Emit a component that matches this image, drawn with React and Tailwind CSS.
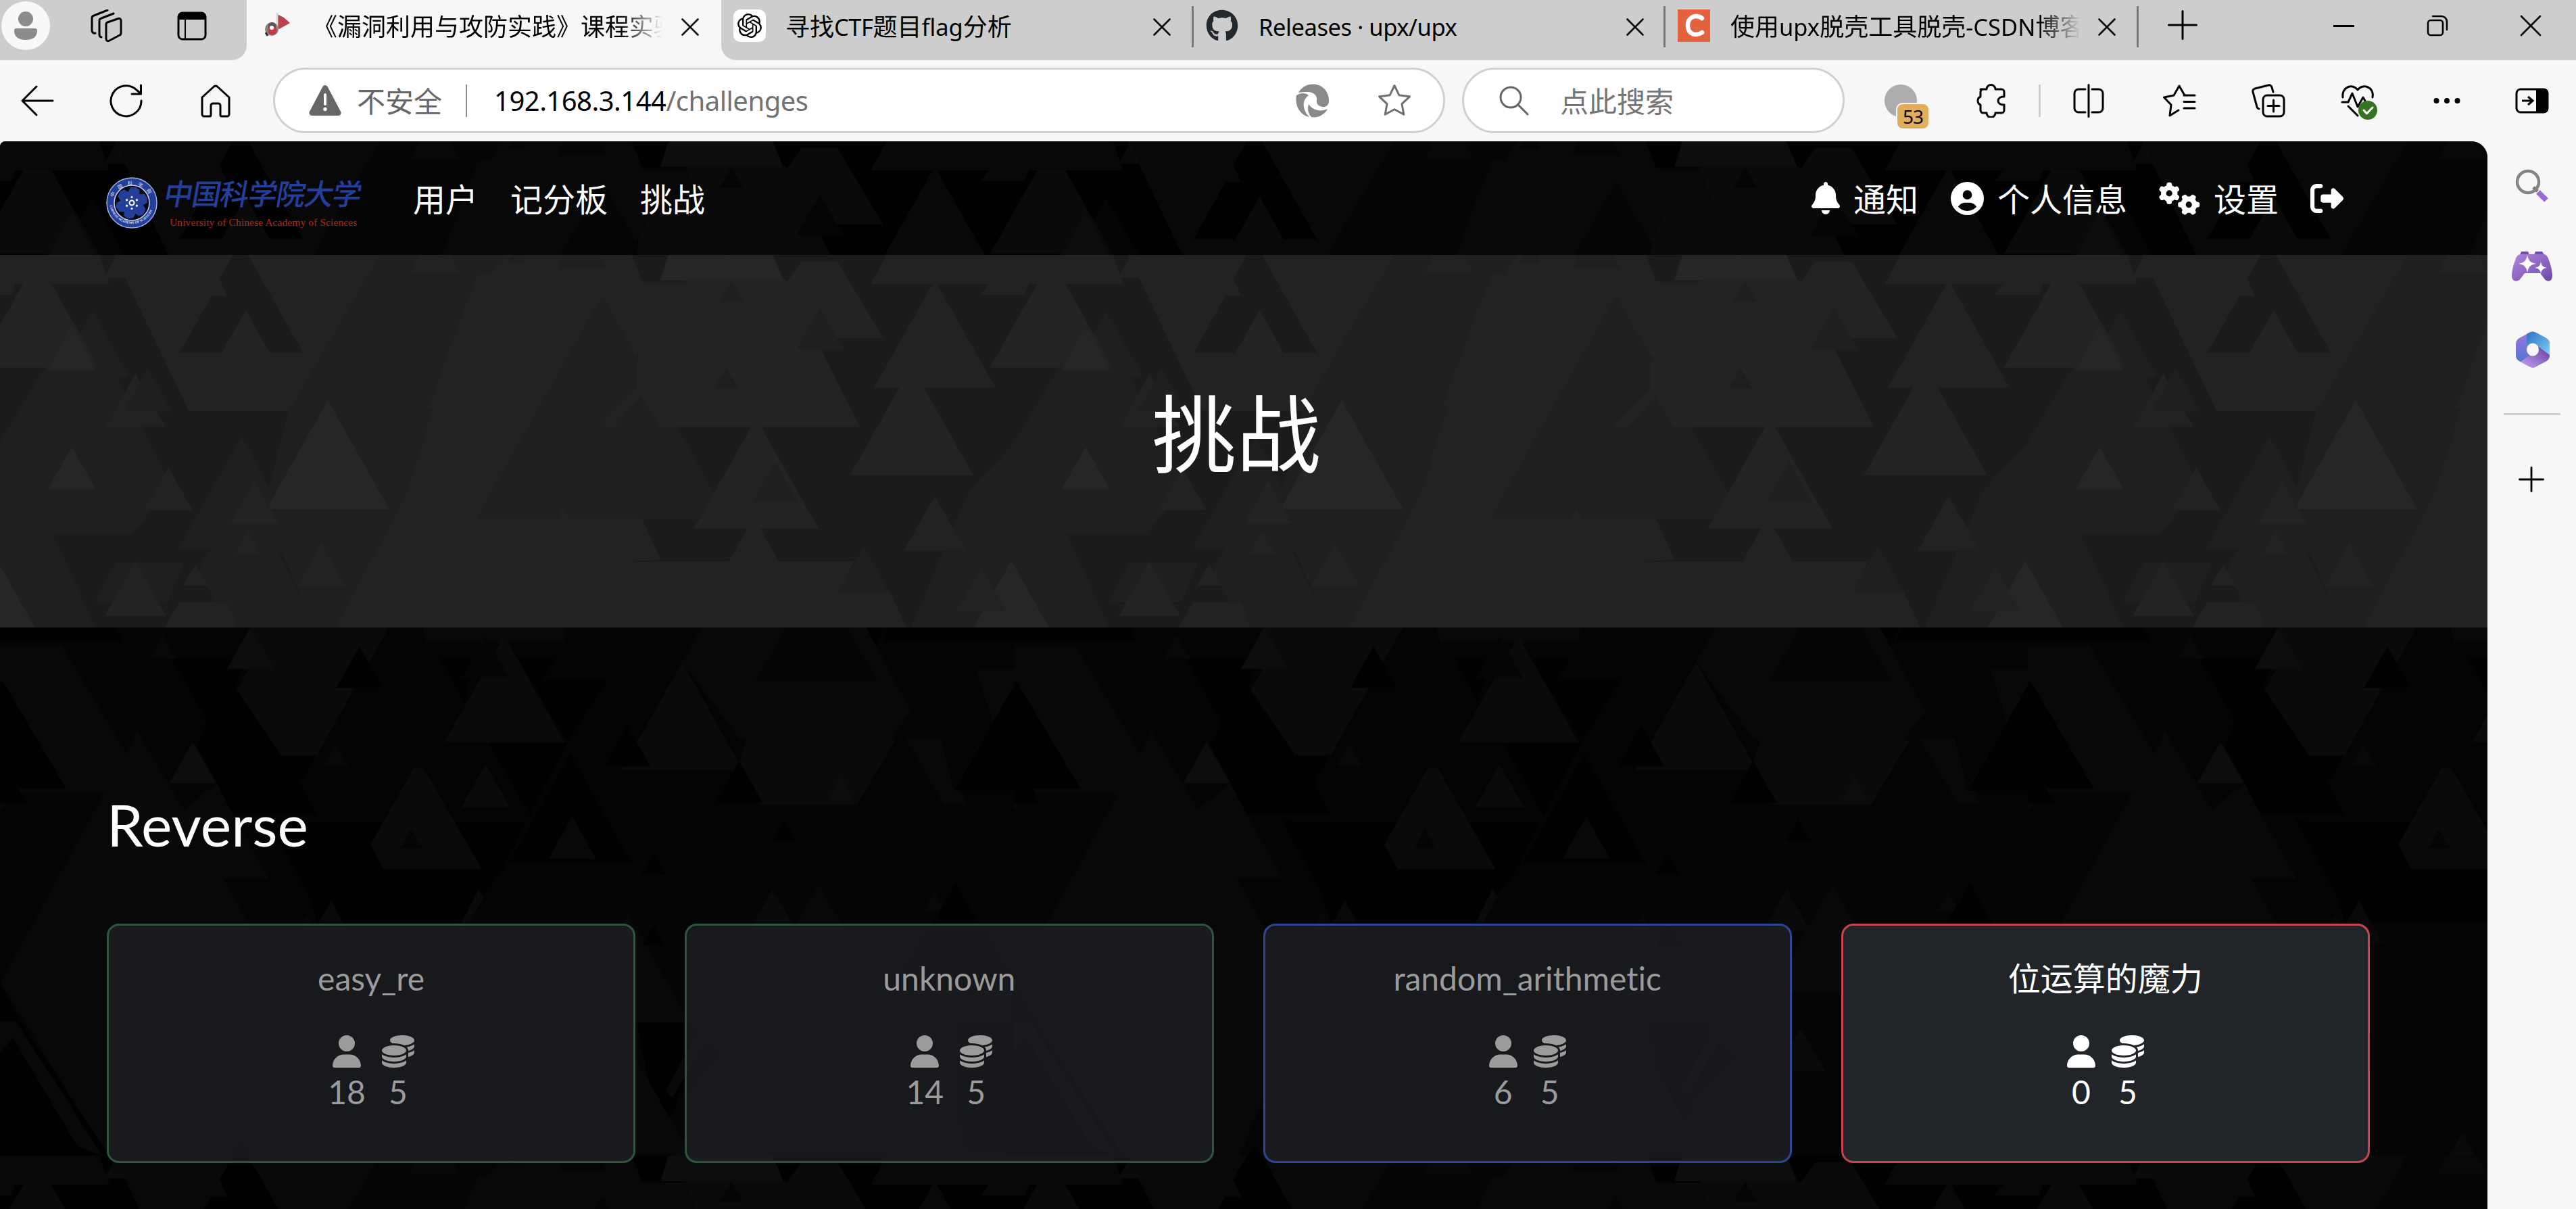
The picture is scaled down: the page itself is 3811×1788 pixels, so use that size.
import React from "react";
import { FaBell, FaCircleUser, FaGears, FaRightFromBracket, FaUser, FaCoins, FaGithub } from "react-icons/fa6";
import { SiOpenai } from "react-icons/si";

/* ---------- triangle wallpaper (1500 x 1500 tile) ---------- */

const shade = { k: "#010101", j: "#040404", a: "#050505", b: "#080808", c: "#0a0a0a", d: "#0d0d0d" };

// Strings are polygons, number lists are [apexX, top, bottom] triangles.
const upper = [
  ["a", "475,0 640,0 600,600 420,1280 400,1280 330,860 362,532"],
  ["a", "1330,380 1410,380 1485,780 1437,940 1337,940 1395,1280 1138,1280 1215,800 1271,640"],
  ["b", "-10,0 122,0 137,112 -10,112"],
  ["b", "140,0 480,0 362,532 237,532"],
  ["k", "308,0 380,340 225,340 265,152 285,152 275,95 295,0"],
  ["b", "636,0 790,0 805,105 862,105 880,240 820,240 798,350 830,890 805,890 828,1025 780,1032 1070,1032 1055,1130 1115,1130 1142,1280 414,1280 510,810 580,205"],
  ["a", [755, 150, 890]],
  ["b", "600,80 630,80 605,330 577,520 537,520 548,440 558,370 580,205"],
  ["b", "528,0 563,0 575,75 515,75"],
  ["c", "860,100 985,100 1078,585 828,585 798,460 800,340 820,240 880,240"],
  ["b", "798,460 806,480 770,585 750,585"],
  ["a", "708,0 750,0 760,62 700,62"],
  ["a", "645,0 660,0 658,42 634,42"],
  ["d", "840,0 966,0 982,100 828,100"],
  ["c", "1005,38 1050,38 1107,290 1010,290 980,130"],
  ["a", [917, 100, 170]],
  ["j", [911, 388, 460]],
  ["a", [1028, 190, 330]],
  ["b", [1172, 100, 455]],
  ["b", "1115,0 1391,0 1408,112 1092,112"],
  ["b", "1240,112 1290,112 1285,148 1230,148"],
  ["c", [1143, 385, 745]],
  ["a", [1387, 205, 420]],
  ["c", [1318, 30, 388]],
  ["d", [1361, 255, 398]],
  ["c", [145, 25, 90]],
  ["c", [308, 200, 340]],
  ["a", "303,620 380,1000 225,985"],
  ["d", [411, 498, 858]],
  ["d", [90, 652, 792]],
  ["b", [211, 720, 860]],
  ["c", [319, 765, 905]],
  ["b", [170, 410, 585]],
  ["a", [185, 395, 535]],
  ["a", [488, 580, 722]],
  ["a", "145,1035 230,1035 210,1165 120,1165"],
  ["a", "265,985 345,985 402,1280 200,1280 270,1165 250,1060"],
  ["c", [403, 972, 1110]],
  ["c", [170, 1032, 1212]],
  ["b", [245, 1040, 1110]],
  ["b", [311, 930, 1005]],
  ["b", "225,1165 285,1165 300,1280 200,1280"],
  ["c", [680, 1015, 1195]],
  ["b", [706, 855, 920]],
  ["c", [948, 558, 922]],
  ["a", [972, 700, 835]],
  ["b", [945, 885, 1040]],
  ["b", [1172, 815, 995]],
  ["d", [1268, 1030, 1280]],
  ["b", [1230, 1050, 1195]],
  ["a", [1083, 985, 1130]],
];

const lower = [
  ["j", "0,0 1568,0 1568,1425 0,1425"],
  ["b", "0,60 95,60 195,350 212,290 285,500 335,430 415,685 345,685 450,1000 350,1425 165,1425 0,960"],
  ["j", "30,460 160,460 0,965 0,500"],
  ["a", "520,535 640,1060 500,1100 560,1300 540,1425 900,1425 1060,1425 1568,1425 1568,560 990,500 880,700 720,800 450,900"],
  ["k", "0,10 180,10 190,55 0,55"],
  ["k", "265,98 375,98 365,180 435,355 490,355 465,430 490,515 360,515 305,330 320,265"],
  ["k", "0,160 5,160 103,445 30,445 40,485 0,485"],
  ["c", "390,0 606,0 490,355 435,355 367,180 385,125"],
  ["k", "410,515 435,535 812,535 780,660 745,732 715,805 490,805 475,725"],
  ["k", "755,322 878,322 820,520"],
  ["k", "800,98 860,98 840,155 940,155 878,322"],
  ["k", "680,98 735,98 718,215"],
  ["b", "650,0 880,0 872,55 660,55"],
  ["b", "1090,0 1335,0 1385,290 1380,315 1145,315 1055,105"],
  ["b", "1312,0 1335,0 1410,240 1385,290"],
  ["k", "1338,10 1372,10 1355,65"],
  ["k", "1372,10 1568,10 1568,55 1365,55"],
  ["b", "1510,125 1568,125 1568,170 1475,445 1455,310 1400,310 1460,488 1495,488 1485,450 1568,450"],
  ["k", "1568,170 1568,450 1475,450"],
  ["d", [387, 15, 125]],
  ["b", [252, 35, 98]],
  ["k", [556, 65, 175]],
  ["d", [298, 320, 430]],
  ["b", [519, 325, 385]],
  ["c", [780, 38, 322]],
  ["a", [751, 38, 150]],
  ["c", [751, 380, 495]],
  ["c", "640,390 655,390 745,660 594,660 573,595"],
  ["a", [636, 550, 605]],
  ["k", [882, 350, 645]],
  ["b", [885, 520, 632]],
  ["c", [1055, 108, 395]],
  ["b", [1120, 10, 125]],
  ["a", [1263, -130, 158]],
  ["c", "1155,315 1385,315 1325,488 1175,488 1143,375"],
  ["d", [1300, 415, 475]],
  ["k", [970, 275, 385]],
  ["k", [1143, 370, 482]],
  ["k", [1213, 525, 585]],
  ["k", [1011, 615, 675]],
  ["c", [1195, 715, 825]],
  ["b", [1266, 700, 990]],
  ["b", [1445, 720, 775]],
  ["k", [1478, 695, 985]],
  ["b", [512, 745, 860]],
  ["b", [475, 785, 930]],
  ["c", "740,715 748,735 718,825 708,825"],
  ["b", [972, 780, 1070]],
  ["b", [930, 810, 920]],
  ["k", [1011, 810, 865]],
  ["k", "985,1070 1065,1070 1110,1160 1050,1270 1040,1318 975,1318 1000,1210"],
  ["c", "1155,865 1167,900 1040,1270 1030,1250"],
  ["c", [1217, 1085, 1200]],
  ["b", [960, 1095, 1420]],
  ["b", [840, 1120, 1270]],
  ["c", [1115, 1205, 1425]],
  ["a", [1130, 1300, 1360]],
  ["c", [1340, 1230, 1340]],
  ["c", [672, 1365, 1425]],
  ["b", [810, 1290, 1425]],
  ["k", "1480,1070 1568,1070 1568,1425 1490,1400"],
  ["k", "0,965 30,1060 170,1425 0,1425"],
  ["b", "0,1068 25,1068 158,1425 120,1400 20,1110 0,1150"],
  ["k", [373, 1395, 1425]],
];

function Shapes({ items, slope }) {
  return items.map(([tone, shape], i) => {
    const points =
      typeof shape === "string"
        ? shape
        : `${shape[0]},${shape[1]} ${shape[0] + (shape[2] - shape[1]) * slope},${shape[2]} ${shape[0] - (shape[2] - shape[1]) * slope},${shape[2]}`;
    return <polygon key={i} points={points} fill={shade[tone]} />;
  });
}

function Wallpaper({ id }) {
  return (
    <svg className="absolute inset-0 -z-10 h-full w-full" aria-hidden="true">
      <defs>
        <pattern id={id} width="1500" height="1500" patternUnits="userSpaceOnUse">
          <rect width="1500" height="1500" fill={shade.k} />
          <g transform="translate(-1500 -7) scale(1.18 .4464)">
            <Shapes items={upper} slope={0.2137} />
          </g>
          <g transform="translate(0 -7) scale(1.18 .4464)">
            <Shapes items={upper} slope={0.2137} />
          </g>
          <g transform="translate(0 711) scale(.9566 .5536)">
            <Shapes items={lower} slope={0.327} />
          </g>
        </pattern>
      </defs>
      <rect width="100%" height="100%" fill={`url(#${id})`} />
    </svg>
  );
}

/* ---------- small building blocks ---------- */

function Line({ className = "", width = 3, box = "0 0 48 48", children }) {
  return (
    <svg viewBox={box} className={`shrink-0 ${className}`} fill="none" stroke="currentColor" strokeWidth={width} strokeLinecap="round" strokeLinejoin="round">
      {children}
    </svg>
  );
}

const Cross = ({ className }) => (
  <Line className={className} box="0 0 26 26" width={2.6}>
    <path d="M1.5 1.5l23 23M24.500 1.500l-23 23" />
  </Line>
);

const Divider = ({ className }) => <div className={`h-[61px] w-[3px] shrink-0 bg-[#777] ${className}`} />;

/* ---------- browser chrome ---------- */

function TabStrip() {
  return (
    <div className="flex h-[89px] items-start bg-[#cdcdcd] text-[36px] leading-[79px] text-black">
      <div className="flex h-[89px] w-[365px] shrink-0 rounded-br-[22px] bg-[#cdcdcd]">
        <svg viewBox="0 0 72 72" className="ml-[2px] mt-[2px] size-[72px]">
          <circle cx="36" cy="36" r="36" fill="#f8f8f8" />
          <circle cx="36" cy="26" r="11" fill="#8b8b8b" />
          <path d="M19 43a3 3 0 0 1 3-3h28a3 3 0 0 1 3 3c0 9-6 14-17 14s-17-5-17-14z" fill="#8b8b8b" />
        </svg>
        <Line className="ml-[59px] mt-[14px] size-[48px]">
          <path d="M26 19l16-5.500a3 3 0 0 1 4 3v18a4 4 0 0 1-3 4l-15 8a3 3 0 0 1-4-3V22a3 3 0 0 1 2-3zM17 41a4 4 0 0 1-3-4V17a4 4 0 0 1 3-4L35 6M8 35a4 4 0 0 1-5-4V13a4 4 0 0 1 3-4L26 1" />
        </Line>
        <svg viewBox="0 0 44 43" className="ml-[81px] mt-[17px] h-[43px] w-[44px]">
          <rect x="2" y="2" width="40" height="39" rx="6" fill="none" stroke="#000" strokeWidth="3" />
          <path d="M2 12V7a6 6 0 0 1 6-6h28a6 6 0 0 1 6 6v5z" />
          <path d="M12 12v29" stroke="#000" strokeWidth="2" />
        </svg>
      </div>

      <div className="-ml-[22px] h-[89px] w-[22px] shrink-0 bg-[#f7f7f7]">
        <div className="h-full w-full rounded-br-[22px] bg-[#cdcdcd]" />
      </div>

      <div className="flex h-[89px] w-[702px] shrink-0 bg-[#f7f7f7]">
        <svg viewBox="0 0 44 40" className="ml-[25px] mt-[19px] h-[40px] w-[44px]">
          <path d="M20 2l10 5 9 8-16 9-3-2z" fill="#b8434a" />
          <path d="M20 0v24" stroke="#d8d8d8" strokeWidth="3" />
          <circle cx="12" cy="24" r="10" fill="#8c7f80" />
          <path d="M7 17c2-4 9-4 11 0v6H7z" fill="#5b5557" />
          <circle cx="13" cy="26" r="6.500" fill="#c23a41" />
          <circle cx="12" cy="22" r="3" fill="#fff" />
          <path d="M3 29l3 5" stroke="#333" strokeWidth="3" />
        </svg>
        <div className="ml-[29px] w-[517px] shrink-0 overflow-hidden whitespace-nowrap [mask-image:linear-gradient(to_right,black_88%,transparent)]">
          《漏洞利用与攻防实践》课程实验
        </div>
        <Cross className="ml-[28px] mt-[27px] size-[26px]" />
      </div>
      <div className="h-[89px] w-[22px] shrink-0 bg-[#f7f7f7]">
        <div className="h-full w-full rounded-bl-[22px] bg-[#cdcdcd]" />
      </div>

      <div className="-ml-[4px] mt-[14px] flex size-[48px] shrink-0 items-center justify-center rounded-[10px] bg-white">
        <SiOpenai className="size-[36px]" />
      </div>
      <div className="ml-[29px] w-[544px] shrink-0 whitespace-nowrap">
        寻找<span className="text-[34.500px] tracking-[-0.5px]">CTF</span>题目<span className="text-[34.500px]">flag</span>分析
      </div>
      <Cross className="mt-[27px] size-[26px]" />
      <Divider className="ml-[31px] mt-[9px]" />
      <FaGithub className="ml-[18px] mt-[14px] size-[48px] shrink-0 text-[#24292f]" />
      <div className="ml-[30px] w-[544px] shrink-0 whitespace-nowrap text-[34.500px] tracking-[-0.45px]">Releases · upx/upx</div>
      <Cross className="mt-[27px] size-[26px]" />
      <Divider className="ml-[29px] mt-[9px]" />
      <div className="ml-[18px] mt-[14px] flex size-[48px] shrink-0 items-center justify-center bg-[#e5623f]">
        <Line className="size-[40px] text-white" box="0 0 40 40" width={6.500}>
          <path d="M32 9c-10-7-22-1-21 12 1 12 12 15 21 9" />
        </Line>
      </div>
      <div className="ml-[30px] w-[518px] shrink-0 overflow-hidden whitespace-nowrap [mask-image:linear-gradient(to_right,black_88%,transparent)]">
        使用<span className="text-[34.500px]">upx</span>脱壳工具脱壳<span className="text-[34.500px]">-CSDN</span>博客
      </div>
      <Cross className="ml-[26px] mt-[27px] size-[26px]" />
      <Divider className="ml-[31px] mt-[9px]" />
      <Line className="ml-[43px] mt-[15px] size-[44px]" box="0 0 44 44">
        <path d="M22 1.500v41M1.500 22h41" />
      </Line>
      <div className="ml-[201px] mt-[37px] h-[3px] w-[31px] shrink-0 bg-black" />
      <Line className="ml-[107px] mt-[22px] size-[32px]" box="0 0 32 32" width={2.600}>
        <rect x="2" y="8" width="22" height="22" rx="4" />
        <path d="M9 2h13a8 8 0 0 1 8 8v12" />
      </Line>
      <Line className="ml-[106px] mt-[22px] size-[32px]" box="0 0 32 32" width={2.600}>
        <path d="M2 2l28 28M30 2L2 30" />
      </Line>
    </div>
  );
}

function Toolbar() {
  return (
    <div className="flex h-[119px] items-center bg-[#f7f7f7] text-black">
      <Line className="ml-[30px] size-[50px]" box="0 0 50 50">
        <path d="M48 25H3M24 4L3 25l21 21" />
      </Line>
      <Line className="ml-[82px] size-[50px]" box="0 0 50 50">
        <path d="M47 25A22.500 22.500 0 1 1 40 9l6 5M46.500 2v13H33" />
      </Line>
      <Line className="ml-[84px] h-[50px] w-[46px]" box="0 0 46 50">
        <path d="M3 20L20.500 4a4 4 0 0 1 5 0L43 20v25a3 3 0 0 1-3 3h-8a2 2 0 0 1-2-2V32a3 3 0 0 0-3-3h-8a3 3 0 0 0-3 3v14a2 2 0 0 1-2 2H6a3 3 0 0 1-3-3z" />
      </Line>

      <div className="ml-[62px] flex h-[97px] w-[1734px] shrink-0 items-center rounded-full border-[3px] border-[#d0d0d0] bg-white">
        <svg viewBox="0 0 50 46" className="ml-[49px] mb-[2px] h-[46px] w-[50px]">
          <path d="M21.500 3a4 4 0 0 1 7 0L48 40a4 4 0 0 1-3.500 6h-39A4 4 0 0 1 2 40z" fill="#666" />
          <path d="M25 15v14" stroke="#fff" strokeWidth="4" strokeLinecap="round" />
          <circle cx="25" cy="36.500" r="2.700" fill="#fff" />
        </svg>
        <span className="ml-[22px] mt-[2px] w-[126px] shrink-0 whitespace-nowrap text-[42px] leading-[60px] text-[#666]">不安全</span>
        <div className="ml-[35px] h-[48px] w-[2px] bg-[#8a8a8a]" />
        <span className="ml-[40px] mt-[1px] w-[1186px] shrink-0 text-[40px] leading-[60px] tracking-[-0.5px]">
          192.168.3.144<span className="text-[#727272]">/challenges</span>
        </span>
        <svg viewBox="0 0 50 50" className="size-[50px] shrink-0" fill="#8a8a8a">
          <path d="M4 13C9 4 19-1 30 1c12 2 20 13 19 26-1 5-5 8-10 7-6-1-9-5-8-10 1-7-5-12-13-12-5 0-10 0-14 1z" />
          <path d="M1 17c6-4 14-4 18 0-7 5-9 13-6 21 1 4 4 8 7 11C6 46-2 32 1 17z" />
          <path d="M19 30c6 9 18 12 28 7-5 10-16 14-24 12-5-5-6-12-4-19z" />
        </svg>
        <Line className="ml-[71px] size-[50px] text-[#707070]" box="0 0 50 50">
          <path d="M25 2.500l6.800 14.200 15.700 2.100L36 29.700l2.800 15.500L25 37.800l-13.800 7.400L14 29.700 2.500 18.800l15.700-2.100z" />
        </Line>
      </div>

      <div className="ml-[25px] flex h-[97px] w-[566px] shrink-0 items-center rounded-full border-[3px] border-[#d0d0d0] bg-white">
        <Line className="ml-[52px] size-[44px] text-[#666]" box="0 0 44 44">
          <circle cx="17" cy="17" r="15" />
          <path d="M28 28l14 14" />
        </Line>
        <span className="ml-[46px] mt-[2px] text-[42px] leading-[60px] text-[#757575]">点此搜索</span>
      </div>

      <div className="relative ml-[59px] size-[48px] shrink-0 rounded-full bg-[#acacac]">
        <span className="absolute left-[17px] top-[27px] flex h-[40px] w-[50px] items-center justify-center rounded-[10px] border-2 border-[#f7f7f7] bg-[#e3ae5c] text-[28px] leading-none tracking-[-1px]">53</span>
      </div>
      <Line className="ml-[86px] h-[50px] w-[46px]" box="0 0 46 50">
        <path d="M8 8h9a6.500 6.500 0 0 1 13 0h9a4 4 0 0 1 4 4v7c-12-1-12 13 0 12v8a4 4 0 0 1-4 4h-9a6.500 6.500 0 0 1-13 0H12a4 4 0 0 1-4-4v-8a6.500 6.500 0 0 1 0-12v-7a4 4 0 0 1 4-4" />
      </Line>
      <div className="ml-[48px] h-[48px] w-[3px] shrink-0 bg-[#cfcfcf]" />
      <Line className="ml-[48px] h-[50px] w-[46px]" box="0 0 46 50">
        <path d="M18 8H8a6 6 0 0 0-6 6v22a6 6 0 0 0 6 6h10M28 8h10a6 6 0 0 1 6 6v22a6 6 0 0 1-6 6H28M23 1.500v47" />
      </Line>
      <Line className="ml-[86px] size-[50px]" box="0 0 50 50">
        <path d="M33 17L25 3l-8 14L2.500 20 13 31l-2 16 13-8M32 17h16M32 26.500h16M32 36h16" />
      </Line>
      <Line className="ml-[82px] size-[50px]" box="0 0 50 50">
        <rect x="17" y="17" width="31" height="31" rx="6" />
        <path d="M32.500 24v17M24 32.500h17M32 12l-2-7a4 4 0 0 0-5-3L5 7a4 4 0 0 0-3 5l6 22a4 4 0 0 0 3 3" />
      </Line>
      <svg viewBox="0 0 56 54" className="ml-[82px] mt-[4px] h-[54px] w-[56px] shrink-0" fill="none" stroke="#000" strokeWidth="3" strokeLinecap="round" strokeLinejoin="round">
        <path d="M3 20C1 4 18-1 25 9 32-1 50 4 47 20M2 27h9l6-13 8 20 8-14 3 5M11 33l14 14" />
        <circle cx="40" cy="39" r="14" fill="#36731f" stroke="none" />
        <path d="M34 39l4.500 5 8.500-9" stroke="#fff" />
      </svg>
      <svg viewBox="0 0 40 10" className="ml-[81px] h-[10px] w-[40px] shrink-0">
        <circle cx="4.500" cy="5" r="4" />
        <circle cx="20" cy="5" r="4" />
        <circle cx="35.500" cy="5" r="4" />
      </svg>
      <svg viewBox="0 0 50 38" className="ml-[81px] h-[38px] w-[50px] shrink-0">
        <rect x="2" y="2" width="46" height="34" rx="6" fill="none" stroke="#000" strokeWidth="3" />
        <path d="M31 1h12a6 6 0 0 1 6 6v24a6 6 0 0 1-6 6H31z" />
        <path d="M10 19h15M19 13l7 6-7 6" fill="none" stroke="#000" strokeWidth="3" />
      </svg>
    </div>
  );
}

function EdgeSidebar() {
  return (
    <aside className="flex w-[131px] shrink-0 flex-col items-center bg-[#f7f7f7]">
      <svg viewBox="0 0 50 50" className="mt-[41px] size-[50px]" fill="none">
        <path d="M34 34l12 12" stroke="#9a6bd0" strokeWidth="8" strokeLinecap="butt" />
        <path d="M27 27l6 6" stroke="#777" strokeWidth="5" />
        <circle cx="19" cy="19" r="16" stroke="#858585" strokeWidth="4.500" />
      </svg>
      <svg viewBox="0 0 60 46" className="mt-[71px] h-[46px] w-[60px]">
        <defs>
          <linearGradient id="pad" x1="0" y1="0" x2="1" y2="1">
            <stop stopColor="#b184e0" />
            <stop offset="1" stopColor="#6c4aa8" />
          </linearGradient>
        </defs>
        <path d="M14 1h10l2 5h-14zM35 1h10l3 5H33z" fill="#7350a8" />
        <path d="M14 5h32c5 0 7 3 9 9 3 8 5 17 5 23 0 9-8 10-12 4l-6-8H19l-6 8c-4 6-13 5-13-4 0-6 2-15 5-23 2-6 4-9 9-9z" fill="url(#pad)" />
        <path d="M23 6c2 9 4 11 13 13-9 2-11 4-13 13-2-9-4-11-13-13 9-2 11-4 13-13z" fill="#fff" />
        <path d="M43 16c1 6 3 8 9 9-6 1-8 3-9 9-1-6-3-8-9-9 6-1 8-3 9-9z" fill="#fff" />
      </svg>
      <svg viewBox="0 0 50 54" className="ml-[2px] mt-[73px] h-[54px] w-[50px]">
        <defs>
          <linearGradient id="ribbonLeft" x1="0" y1="0" x2="0" y2="1">
            <stop stopColor="#a276d8" />
            <stop offset="1" stopColor="#3f78d2" />
          </linearGradient>
          <linearGradient id="ribbonTop" x1="0" y1="0" x2="1" y2="1">
            <stop stopColor="#2f6fc4" />
            <stop offset="1" stopColor="#7cd3f5" />
          </linearGradient>
          <linearGradient id="ribbonBottom" x1="0" y1="1" x2="1" y2="0">
            <stop stopColor="#c9a0f2" />
            <stop offset="1" stopColor="#5e3f9c" />
          </linearGradient>
        </defs>
        <path d="M20 2Q25-1 30 2L45 10Q50 13 50 19V36Q50 41 45 44L30 52Q25 55 20 52L5 44Q0 41 0 36V19Q0 13 5 10Z" fill="url(#ribbonLeft)" />
        <path d="M16 4L20 2Q25-1 30 2L45 10Q50 13 50 19V36L34 23L25 27L16 20Z" fill="url(#ribbonTop)" />
        <path d="M34 23L50 35Q50 41 45 44L30 52Q25 55 20 52L7 45L25 32Z" fill="url(#ribbonBottom)" />
        <ellipse cx="25" cy="27" rx="9" ry="9.500" fill="#f7f7f7" />
      </svg>
      <div className="mt-[67px] h-[3px] w-[84px] bg-[#d0d0d0]" />
      <Line className="-ml-[2px] mt-[76px] size-[38px] text-black" box="0 0 38 38" width={2.800}>
        <path d="M19 1.500v35M1.500 19h35" />
      </Line>
    </aside>
  );
}

/* ---------- web page ---------- */

function UniversityLogo() {
  return (
    <div className="flex h-[76px] w-[384px] shrink-0">
      <svg viewBox="0 0 76 76" className="size-[76px] shrink-0">
        <defs>
          <path id="arcLow" d="M5 36a33 33 0 0 0 66 0" />
          <path id="arcHigh" d="M9 34a30 30 0 0 1 58 0" />
        </defs>
        <circle cx="38" cy="38" r="37" fill="#233f99" stroke="#9fb0dd" strokeWidth="1.500" />
        <circle cx="38" cy="38" r="26" fill="#04060d" stroke="#c3cdec" strokeWidth="1.500" />
        {[10, 70, 130, 190, 250, 310].map((angle) => (
          <path key={angle} d="M38 38L29 25l3-9 8-2 6 3 1 8z" fill="#233f99" transform={`rotate(${angle} 38 38)`} />
        ))}
        <circle cx="38" cy="38" r="3.500" fill="none" stroke="#fff" strokeWidth="2" />
        {[0, 60, 120, 180, 240, 300].map((angle) => (
          <circle key={angle} cx="38" cy="29.500" r="1.600" fill="#fff" transform={`rotate(${angle} 38 38)`} />
        ))}
        <text fontSize="5" fill="#e4e9f8" fontFamily="Liberation Serif" fontWeight="bold">
          <textPath href="#arcLow" startOffset="6">CHINESE ACADEMY OF SCIENCES</textPath>
        </text>
        <text fontSize="7" fill="#e4e9f8" fontFamily="Noto Sans CJK SC" letterSpacing="7.5">
          <textPath href="#arcHigh" startOffset="4">中国科学院</textPath>
        </text>
      </svg>
      <div className="ml-[9px] flex flex-col whitespace-nowrap">
        <div className="h-[62px] w-[290px] skew-x-[-10deg] text-[43px] font-medium leading-[50px] tracking-[-1.400px] text-[#233f99]">中国科学院大学</div>
        <div className="-mt-[3px] ml-[9px] font-['Liberation_Serif'] text-[15.500px] font-normal leading-[18px] tracking-[0.1px] text-[#b3261a]">
          University of Chinese Academy of Sciences
        </div>
      </div>
    </div>
  );
}

function Navbar() {
  return (
    <nav className="relative isolate flex h-[168px] items-center pl-[157px] text-[48px] leading-[72px] text-white">
      <Wallpaper id="navTriangles" />
      <div className="pt-[14px]">
        <UniversityLogo />
      </div>
      <div className="ml-[70px] mt-[3px] flex w-[2069px] shrink-0 gap-[48px]">
        <span>用户</span>
        <span>记分板</span>
        <span>挑战</span>
      </div>
      <FaBell className="h-[48px] w-[42px] shrink-0" />
      <span className="ml-[20px] mt-[3px] shrink-0">通知</span>
      <FaCircleUser className="ml-[48px] size-[49px] shrink-0" />
      <span className="ml-[20px] mt-[3px] shrink-0">个人信息</span>
      <FaGears className="ml-[47px] h-[49px] w-[61px] shrink-0" />
      <span className="ml-[20px] mt-[3px] shrink-0">设置</span>
      <FaRightFromBracket className="ml-[47px] size-[49px] shrink-0" />
    </nav>
  );
}

const challenges = [
  { name: "easy_re", solves: 18, points: 5, style: "border-[#2c573b] bg-[#1f2025]/75 text-[#9b9b9b]" },
  { name: "unknown", solves: 14, points: 5, style: "border-[#2c573b] bg-[#1f2025]/75 text-[#9b9b9b]" },
  { name: "random_arithmetic", solves: 6, points: 5, style: "border-[#2b4597] bg-[#1f2025]/75 text-[#9b9b9b]" },
  { name: "位运算的魔力", solves: 0, points: 5, style: "border-[#c8454b] bg-[#212529] text-white" },
];

function ChallengeCard({ name, solves, points, style }) {
  return (
    <div className={`flex h-[354px] flex-col items-center rounded-[18px] border-[3px] text-[48px] ${style}`}>
      <div className="mt-[42px] leading-[72px] [font-variant-ligatures:none]">{name}</div>
      <div className="mt-[48px] flex gap-[24px]">
        <div className="flex flex-col items-center">
          <FaUser className="h-[48px] w-[42px]" />
          <span className="mt-[6px] leading-[60px]">{solves}</span>
        </div>
        <div className="flex flex-col items-center">
          <FaCoins className="size-[48px]" />
          <span className="mt-[6px] leading-[60px]">{points}</span>
        </div>
      </div>
    </div>
  );
}

export default function App() {
  return (
    <div className="flex h-[1788px] w-[3811px] flex-col overflow-hidden bg-[#f7f7f7] font-['Noto_Sans','Noto_Sans_CJK_SC',sans-serif]">
      <TabStrip />
      <Toolbar />
      <div className="flex min-h-0 flex-1 pt-[1px]">
        <main className="relative isolate flex w-[3680px] shrink-0 flex-col overflow-hidden rounded-tl-[8px] rounded-tr-[24px] font-['Lato','Noto_Sans_CJK_SC',sans-serif] text-white">
          <Wallpaper id="pageTriangles" />
          <Navbar />
          <header className="relative isolate flex h-[551px] shrink-0 justify-center pr-[22px]">
            <Wallpaper id="heroTriangles" />
            <div className="absolute inset-0 -z-10 bg-white/[0.107]" />
            <h1 className="mt-[174px] text-[125px] leading-[180px]">挑战</h1>
          </header>
          <section className="px-[158px] pt-[236px]">
            <h3 className="text-[86px] leading-[110px]">Reverse</h3>
            <div className="mt-[92px] grid w-[3348px] grid-cols-4 gap-[73px]">
              {challenges.map((challenge) => (
                <ChallengeCard key={challenge.name} {...challenge} />
              ))}
            </div>
          </section>
        </main>
        <EdgeSidebar />
      </div>
    </div>
  );
}
